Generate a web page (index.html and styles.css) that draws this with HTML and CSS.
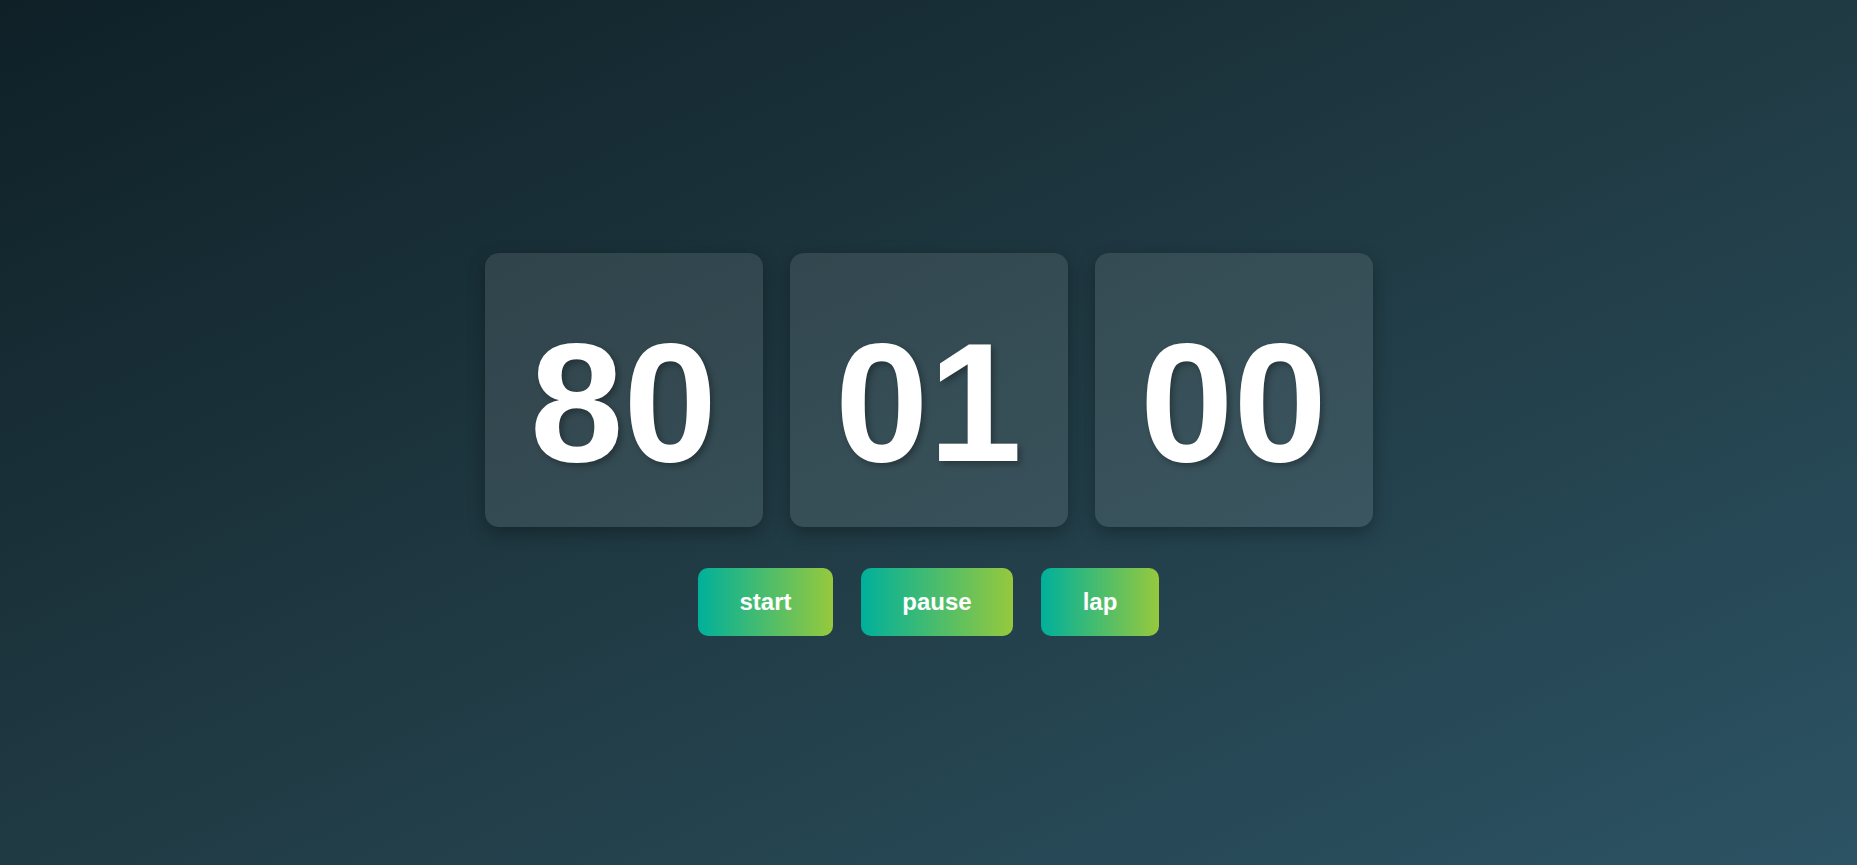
FILE: index.html
```html
<!DOCTYPE html>
<html lang="en">
<head>
<meta charset="utf-8">
<title>Stopwatch</title>
<link rel="stylesheet" href="styles.css">
</head>
<body>
<main class="app">
  <section class="display">
    <div class="card"><span class="digits">80</span></div>
    <div class="card"><span class="digits">01</span></div>
    <div class="card"><span class="digits">00</span></div>
  </section>
  <section class="controls">
    <button class="btn btn-start">start</button>
    <button class="btn btn-pause">pause</button>
    <button class="btn btn-lap">lap</button>
  </section>
</main>
</body>
</html>
```
FILE: styles.css
```css
* { box-sizing: border-box; }
html, body { margin: 0; padding: 0; height: 100%; }
body {
  font-family: "Liberation Sans", Arial, sans-serif;
  background: linear-gradient(to right bottom, #0f2027, #203a43, #2c5364);
  overflow: hidden;
}
.app {
  height: 865px;
  padding-top: 24px;
  display: flex;
  flex-direction: column;
  align-items: center;
  justify-content: center;
}
.display {
  display: flex;
  gap: 27px;
}
.card {
  width: 278px;
  height: 274px;
  border-radius: 14px;
  background: rgba(255, 255, 255, 0.1);
  box-shadow: 0 6px 18px rgba(0, 0, 0, 0.3);
  display: flex;
  justify-content: center;
  padding-top: 54px;
}
.digits {
  color: #fff;
  font-weight: 700;
  font-size: 168px;
  line-height: 1.15;
  height: 193px;
  text-shadow: 3px 3px 6px rgba(0, 0, 0, 0.3);
}
.controls {
  display: flex;
  gap: 28px;
  margin-top: 41px;
}
.btn {
  border: none;
  border-radius: 10px;
  height: 68px;
  padding: 0 41px;
  font-family: "Liberation Sans", Arial, sans-serif;
  font-weight: 700;
  font-size: 24px;
  color: #fff;
  background: linear-gradient(to right, #00b09b, #96c93d);
  cursor: pointer;
}
.btn-start { width: 135px; }
.btn-pause { width: 152px; }
.btn-lap { width: 118px; }
```
